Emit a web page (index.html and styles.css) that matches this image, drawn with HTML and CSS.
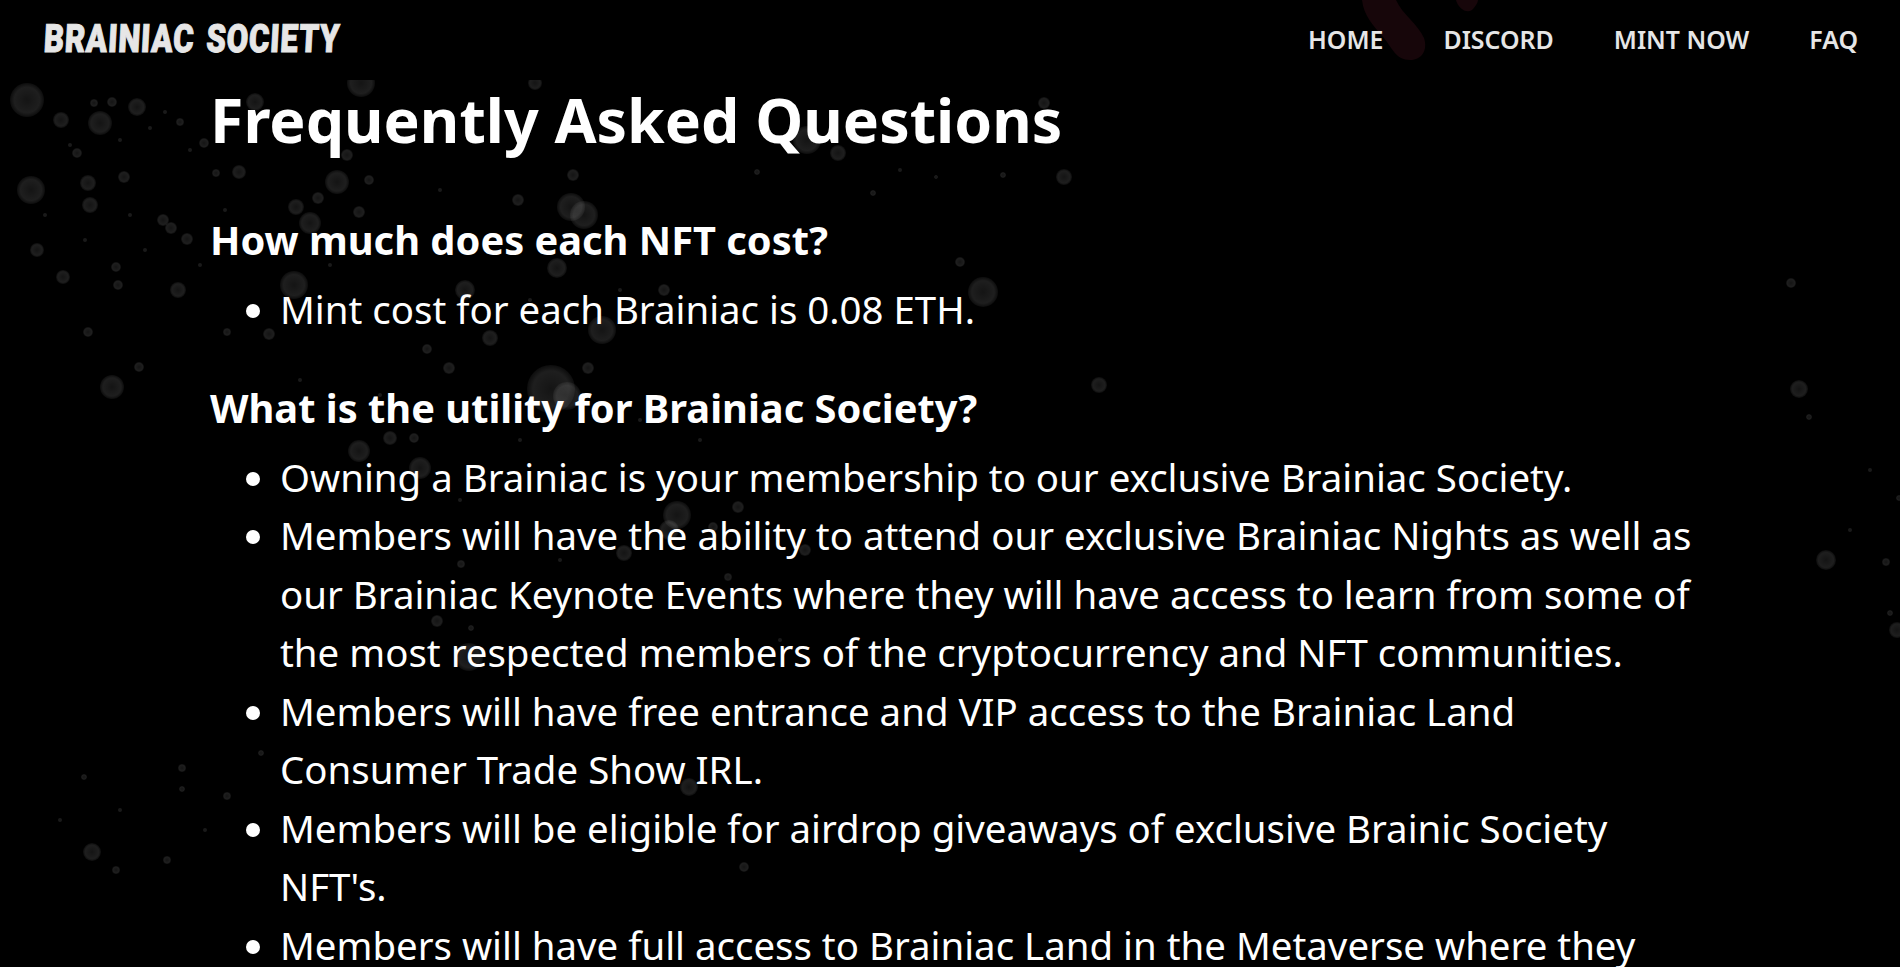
FILE: index.html
```html
<!DOCTYPE html>
<html>
<head>
	<meta charset="utf-8">
	<title>Brainiac Society</title>
	<link rel="stylesheet" href="styles.css">
</head>
<body>
	<svg class="splatter" width="1900" height="887" viewBox="0 80 1900 887">
		<defs>
			<radialGradient id="drop">
				<stop offset="0" stop-color="#fff" stop-opacity="0.08"/>
				<stop offset="0.75" stop-color="#fff" stop-opacity="0.12"/>
				<stop offset="1" stop-color="#fff" stop-opacity="0.05"/>
			</radialGradient>
		</defs>
		<g fill="url(#drop)">
			<circle cx="27" cy="100" r="17"/><circle cx="31" cy="190" r="14"/><circle cx="571" cy="207" r="14"/><circle cx="584" cy="215" r="14"/>
			<circle cx="361" cy="83" r="14"/><circle cx="137" cy="107" r="9"/><circle cx="100" cy="123" r="12"/><circle cx="61" cy="120" r="8"/>
			<circle cx="88" cy="183" r="8"/><circle cx="124" cy="177" r="6"/><circle cx="90" cy="205" r="8"/><circle cx="239" cy="172" r="7"/>
			<circle cx="255" cy="102" r="9"/><circle cx="296" cy="207" r="8"/><circle cx="337" cy="182" r="12"/><circle cx="359" cy="212" r="6"/>
			<circle cx="310" cy="223" r="11"/><circle cx="294" cy="285" r="14"/><circle cx="465" cy="290" r="10"/><circle cx="178" cy="290" r="8"/>
			<circle cx="63" cy="277" r="7"/><circle cx="116" cy="267" r="5"/><circle cx="118" cy="285" r="5"/><circle cx="37" cy="250" r="7"/>
			<circle cx="163" cy="220" r="6"/><circle cx="171" cy="228" r="6"/><circle cx="187" cy="239" r="6"/><circle cx="557" cy="268" r="10"/>
			<circle cx="573" cy="175" r="6"/><circle cx="180" cy="122" r="4"/><circle cx="112" cy="102" r="5"/><circle cx="94" cy="103" r="4"/>
			<circle cx="77" cy="153" r="5"/><circle cx="204" cy="143" r="5"/><circle cx="216" cy="173" r="4"/><circle cx="369" cy="180" r="5"/>
			<circle cx="318" cy="198" r="6"/><circle cx="518" cy="200" r="6"/><circle cx="347" cy="155" r="6"/><circle cx="535" cy="83" r="7"/>

			<circle cx="112" cy="387" r="12"/><circle cx="88" cy="332" r="5"/><circle cx="269" cy="334" r="6"/><circle cx="227" cy="332" r="4"/>
			<circle cx="139" cy="367" r="5"/><circle cx="551" cy="389" r="24"/><circle cx="567" cy="396" r="14"/><circle cx="359" cy="451" r="11"/>
			<circle cx="420" cy="468" r="11"/><circle cx="390" cy="438" r="7"/><circle cx="414" cy="438" r="5"/><circle cx="437" cy="621" r="6"/>
			<circle cx="469" cy="657" r="14"/><circle cx="449" cy="368" r="6"/><circle cx="588" cy="368" r="6"/><circle cx="427" cy="349" r="5"/>
			<circle cx="490" cy="338" r="8"/><circle cx="602" cy="330" r="14"/><circle cx="182" cy="768" r="4"/><circle cx="182" cy="789" r="3"/>
			<circle cx="227" cy="796" r="4"/><circle cx="92" cy="852" r="9"/><circle cx="167" cy="860" r="4"/><circle cx="116" cy="870" r="4"/>
			<circle cx="84" cy="777" r="3"/><circle cx="624" cy="553" r="8"/><circle cx="461" cy="564" r="4"/><circle cx="261" cy="753" r="3"/>
			<circle cx="471" cy="628" r="3"/>

			<circle cx="838" cy="153" r="8"/><circle cx="1064" cy="177" r="8"/><circle cx="983" cy="292" r="15"/><circle cx="960" cy="262" r="5"/>
			<circle cx="1099" cy="385" r="8"/><circle cx="664" cy="290" r="6"/><circle cx="1044" cy="103" r="6"/><circle cx="677" cy="515" r="14"/>
			<circle cx="738" cy="507" r="6"/><circle cx="807" cy="140" r="14"/><circle cx="1003" cy="175" r="3"/><circle cx="936" cy="177" r="2"/>
			<circle cx="873" cy="193" r="3"/><circle cx="757" cy="172" r="3"/>

			<circle cx="1799" cy="389" r="9"/><circle cx="1826" cy="560" r="10"/><circle cx="1809" cy="417" r="3"/><circle cx="1886" cy="562" r="4"/>
			<circle cx="1897" cy="630" r="8"/><circle cx="1899" cy="498" r="3"/><circle cx="1890" cy="613" r="3"/><circle cx="1791" cy="283" r="5"/>

			<circle cx="728" cy="577" r="4"/><circle cx="689" cy="787" r="9"/><circle cx="805" cy="550" r="6"/><circle cx="744" cy="867" r="5"/>
			<circle cx="669" cy="530" r="10"/><circle cx="713" cy="527" r="5"/>
		</g>
		<!-- fine specks -->
		<g class="specks">
			<circle cx="70" cy="145" r="2"/><circle cx="120" cy="140" r="2"/><circle cx="150" cy="128" r="2"/><circle cx="165" cy="112" r="2"/>
			<circle cx="190" cy="150" r="2"/><circle cx="45" cy="215" r="2"/><circle cx="130" cy="215" r="2"/><circle cx="145" cy="250" r="2"/>
			<circle cx="85" cy="240" r="2"/><circle cx="200" cy="265" r="2"/><circle cx="225" cy="210" r="2"/><circle cx="260" cy="240" r="2"/>
			<circle cx="330" cy="265" r="2"/><circle cx="400" cy="245" r="2"/><circle cx="440" cy="190" r="2"/><circle cx="495" cy="235" r="2"/>
			<circle cx="530" cy="300" r="2"/><circle cx="620" cy="290" r="2"/><circle cx="300" cy="380" r="2"/><circle cx="380" cy="395" r="2"/>
			<circle cx="520" cy="440" r="2"/><circle cx="460" cy="500" r="2"/><circle cx="560" cy="560" r="2"/><circle cx="640" cy="420" r="2"/>
			<circle cx="700" cy="440" r="2"/><circle cx="1870" cy="470" r="2"/><circle cx="1850" cy="530" r="2"/><circle cx="120" cy="810" r="2"/>
			<circle cx="60" cy="820" r="2"/><circle cx="205" cy="830" r="2"/><circle cx="780" cy="640" r="2"/><circle cx="900" cy="170" r="2"/>
		</g>
	</svg>

	<header class="site-header">
		<svg class="smudge" width="120" height="62" viewBox="0 0 120 62">
			<path d="M0 0 C2 16 10 24 22 38 C30 48 34 60 48 60 C60 60 66 50 62 38 C56 24 40 14 34 0 Z"/>
			<path d="M94 0 C96 8 104 14 110 10 C114 6 116 2 116 0 Z"/>
		</svg>
		<a class="logo" href="#">BRAINIAC SOCIETY</a>
		<nav class="site-nav">
			<a href="#">HOME</a>
			<a href="#">DISCORD</a>
			<a href="#">MINT NOW</a>
			<a href="#">FAQ</a>
		</nav>
	</header>

	<main class="faq">
		<h1>Frequently Asked Questions</h1>

		<h2>How much does each NFT cost?</h2>
		<ul>
			<li>Mint cost for each Brainiac is 0.08 ETH.</li>
		</ul>

		<h2>What is the utility for Brainiac Society?</h2>
		<ul>
			<li>Owning a Brainiac is your membership to our exclusive Brainiac Society.</li>
			<li>Members will have the ability to attend our exclusive Brainiac Nights as well as our Brainiac Keynote Events where they will have access to learn from some of the most respected members of the cryptocurrency and NFT communities.</li>
			<li>Members will have free entrance and VIP access to the Brainiac Land Consumer Trade Show IRL.</li>
			<li>Members will be eligible for airdrop giveaways of exclusive Brainic Society NFT's.</li>
			<li>Members will have full access to Brainiac Land in the Metaverse where they will be able to explore and connect with other members.</li>
		</ul>
	</main>
</body>
</html>
```

FILE: styles.css
```css
html {
	background: #000;
}
body {
	margin: 0;
	height: 967px;
	overflow: hidden;
	color: #fff;
	font-family: "Noto Sans", sans-serif;
}
.splatter {
	position: absolute;
	top: 80px;
	left: 0;
}
.specks {
	fill: #fff;
	fill-opacity: 0.1;
}
.site-header {
	position: relative;
	display: flex;
	align-items: center;
	justify-content: space-between;
	height: 78px;
	padding: 0 42px 2px 44px;
	background: #000;
}
.smudge {
	position: absolute;
	top: 0;
	left: 1362px;
	fill: #17060a;
}
.logo {
	position: relative;
	color: #e6e6e6;
	font-family: "Roboto", sans-serif;
	font-size: 39px;
	font-weight: 900;
	line-height: 40px;
	letter-spacing: 1px;
	word-spacing: 4px;
	text-decoration: none;
	-webkit-text-stroke: 1px #e6e6e6;
	transform: scaleX(0.8) skewX(-4deg);
	transform-origin: left center;
}
.site-nav {
	position: relative;
	display: flex;
	gap: 60px;
}
.site-nav a {
	color: #e6e6e6;
	font-size: 24.9px;
	font-weight: 600;
	text-decoration: none;
}
.faq {
	position: relative;
	width: 1490px;
	margin-left: 210px;
}
h1 {
	margin: 0 0 51px;
	font-size: 60.8px;
	line-height: 80px;
	font-weight: 700;
}
h2 {
	margin: 0 0 11px;
	font-size: 39.8px;
	line-height: 58px;
	font-weight: 700;
}
ul {
	margin: 0 0 40px;
	padding-left: 70px;
}
li {
	font-size: 38.42px;
	line-height: 58.5px;
}
```
